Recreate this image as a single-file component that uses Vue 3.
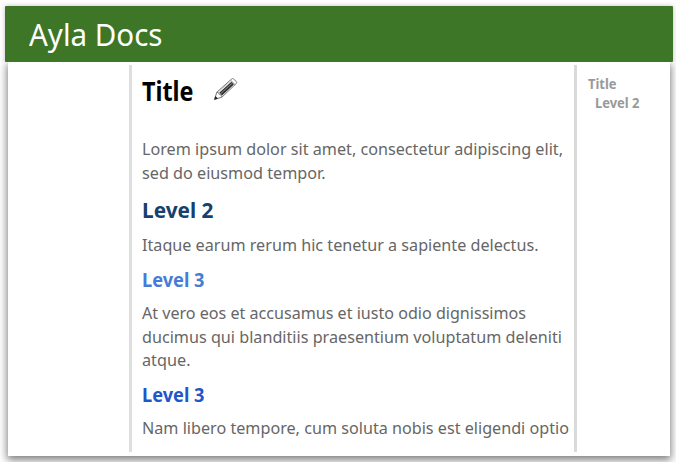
<script setup>
// Condenses a single line of text to the given width in pixels.
const vFit = {
  mounted(el, { value }) {
    el.style.transform = `scaleX(${value / el.getBoundingClientRect().width})`
  },
}

const blocks = [
  { kind: 'body', lines: [['Lorem ipsum dolor sit amet, consectetur adipiscing elit,', 421], ['sed do eiusmod tempor.', 183.5]] },
  { kind: 'level2', lines: [['Level 2', 71.5]] },
  { kind: 'body', lines: [['Itaque earum rerum hic tenetur a sapiente delectus.', 396.5]] },
  { kind: 'level3 light', lines: [['Level 3', 62.5]] },
  { kind: 'body', lines: [['At vero eos et accusamus et iusto odio dignissimos', 384], ['ducimus qui blanditiis praesentium voluptatum deleniti', 420], ['atque.', 48.5]] },
  { kind: 'level3', lines: [['Level 3', 62.5]] },
  { kind: 'body', lines: [['Nam libero tempore, cum soluta nobis est eligendi optio', 427]] },
]
</script>

<template>
  <div class="page">
    <header class="banner"><span v-fit="133.5" class="line">Ayla Docs</span></header>
    <div class="sheet">
      <aside class="left"></aside>
      <main class="content">
        <div class="title">
          <h1><span v-fit="51.5" class="line">Title</span></h1>
          <svg class="pencil" width="26" height="24" viewBox="0 0 26 24">
            <path d="M1.5 22.5 3.8 15.2 18.4 2.2Q19.4 1 20.6 2L23.3 4.5Q24.2 5.6 23.2 6.6L9 20.1Z" fill="#fff" stroke="#666" stroke-width=".9" stroke-linejoin="round" />
            <path d="M6.2 15.8 18.4 4.8 20.9 7.4 9.1 18.5Z" fill="#333" />
            <path d="M5.3 15 17.6 4.1M7.4 16.9 19.4 6" fill="none" stroke="#aaa" stroke-width=".7" />
            <path d="M3.8 15.4Q6 15.2 6.3 17.4 8.8 17.5 8.8 20M17.7 3.3 22 7.6" fill="none" stroke="#666" stroke-width=".8" />
            <path d="M1.2 22.8 2.4 19.1 5 21.5Z" fill="#222" />
          </svg>
        </div>
        <div v-for="(block, i) in blocks" :key="i" :class="['block', block.kind]">
          <div v-for="[text, width] in block.lines" :key="text" class="row">
            <span v-fit="width" class="line">{{ text }}</span>
          </div>
        </div>
      </main>
      <nav class="toc">
        <div><span v-fit="28.5" class="line">Title</span></div>
        <div class="sub"><span v-fit="44.5" class="line">Level 2</span></div>
      </nav>
    </div>
  </div>
</template>

<style>
body {
  background: #fff;
  overflow: hidden;
}
</style>

<style scoped>
.page {
  box-sizing: border-box;
  width: 676px;
  height: 462px;
  padding: 6px 3px 0 5px;
  overflow: hidden;
  font-family: "Noto Sans", "Open Sans", sans-serif;
}
.line {
  display: inline-block;
  white-space: nowrap;
  transform-origin: 0 50%;
}
.banner {
  position: relative;
  z-index: 1;
  box-sizing: border-box;
  width: 668px;
  height: 56px;
  padding: 7px 0 0 23.5px;
  border-radius: 1px;
  background: #3e7628;
  color: #fff;
  font-size: 30px;
  line-height: 44px;
  box-shadow: 0 0 5px rgba(0, 0, 0, .25);
  clip-path: inset(-6px -6px 0 -6px);
}
.sheet {
  display: flex;
  box-sizing: border-box;
  width: 661.5px;
  height: 394px;
  margin-left: 3px;
  padding: 3px 0 4px;
  background: #fff;
  box-shadow: 0 3px 8px 1px rgba(0, 0, 0, .5);
}
.left {
  width: 121px;
}
.content {
  box-sizing: border-box;
  width: 448px;
  padding: 9px 0 0 9.5px;
  border-left: 3px solid #dedede;
  border-right: 3px solid #dadada;
}
.title {
  display: flex;
  height: 63px;
}
h1 {
  width: 71px;
  margin: 0;
  font-size: 26px;
  line-height: 34px;
  font-weight: 700;
  color: #000;
}
.pencil {
  margin-top: 3px;
}
.body {
  color: #666;
  font-size: 17px;
  line-height: 24px;
}
.row {
  height: 24px;
}
.body .row:nth-child(3) {
  margin-top: -1px;
}
.level2, .level3 {
  font-weight: 700;
}
.level2 {
  padding: 10px 0;
  font-size: 22px;
  line-height: 28px;
  color: #17406d;
}
.level2 .row {
  height: 28px;
}
.level3 {
  padding: 11px 0 9px;
  font-size: 19px;
  line-height: 24px;
  color: #1f57c8;
}
.level3.light {
  color: #477bd6;
}
.toc {
  padding: 9px 0 0 11px;
  font-size: 14.5px;
  line-height: 19px;
  font-weight: 700;
  color: #999;
}
.toc div {
  height: 19px;
}
.sub {
  padding-left: 7px;
}
</style>
